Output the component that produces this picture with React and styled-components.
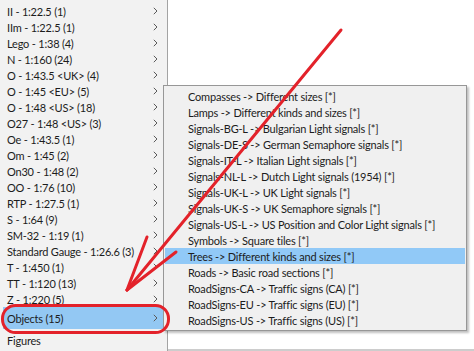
import React from 'react';
import styled, { createGlobalStyle } from 'styled-components';

const Global = createGlobalStyle`
  html, body { margin: 0; padding: 0; background: #fff; }
  body { font-family: Lato, "Noto Sans", sans-serif; }
`;

const Screen = styled.div`
  position: relative;
  width: 474px;
  height: 351px;
  display: flex;
  overflow: hidden;
  background: #fff;
`;

const LeftMenu = styled.div`
  width: 167px;
  flex: none;
  background: #f2f2f2;
  border-right: 1px solid #a3a3a3;
  padding-top: 3px;
  display: flex;
  flex-direction: column;
`;

const Item = styled.div`
  height: ${p => (p.$tall ? 22 : 16)}px;
  flex: none;
  margin: 0 4px 0 3px;
  padding: 0 5px 0 4px;
  display: flex;
  align-items: center;
  justify-content: space-between;
  background: ${p => (p.$active ? '#93c8f3' : 'transparent')};
  font-size: 11px;
  letter-spacing: -0.2px;
  color: #1c1c1c;
  white-space: nowrap;
`;

const RightPane = styled.div`
  flex: 1;
  display: flex;
  flex-direction: column;
`;

const Blank = styled.div`
  flex: 1;
  background: #fff;
`;

const BottomEdge = styled.div`
  height: 2px;
  background: #cdcdcd;
`;

const SubMenu = styled.div`
  position: absolute;
  left: 163px;
  top: 85px;
  width: 300px;
  padding: 2px 1px;
  background: #f0f0f0;
  border: 1px solid #979797;
  box-shadow: 2px 2px 2px rgba(0, 0, 0, 0.25);
  display: flex;
  flex-direction: column;
`;

const SubItem = styled.div`
  height: 16px;
  padding-left: 23px;
  display: flex;
  align-items: center;
  font-size: 11px;
  letter-spacing: -0.2px;
  color: #1c1c1c;
  white-space: nowrap;
  background: ${p => (p.$active ? '#91c9f7' : 'transparent')};
`;

const Overlay = styled.svg`
  position: absolute;
  left: 0;
  top: 0;
  pointer-events: none;
`;

const Chevron = () => (
  <svg width="5" height="8" viewBox="0 0 5 8">
    <path d="M0.8 0.8 L4 4 L0.8 7.2" fill="none" stroke="#5a5a5a" strokeWidth="1" />
  </svg>
);

const scales = [
  'II - 1:22.5 (1)',
  'IIm - 1:22.5 (1)',
  'Lego - 1:38 (4)',
  'N - 1:160 (24)',
  'O - 1:43.5 <UK> (4)',
  'O - 1:45 <EU> (5)',
  'O - 1:48 <US> (18)',
  'O27 - 1:48 <US> (3)',
  'Oe - 1:43.5 (1)',
  'Om - 1:45 (2)',
  'On30 - 1:48 (2)',
  'OO - 1:76 (10)',
  'RTP - 1:27.5 (1)',
  'S - 1:64 (9)',
  'SM-32 - 1:19 (1)',
  'Standard Gauge - 1:26.6 (3)',
  'T - 1:450 (1)',
  'TT - 1:120 (13)',
  'Z - 1:220 (5)',
];

const objects = [
  'Compasses -> Different sizes [*]',
  'Lamps -> Different kinds and sizes [*]',
  'Signals-BG-L -> Bulgarian Light signals [*]',
  'Signals-DE-S -> German Semaphore signals [*]',
  'Signals-IT-L -> Italian Light signals [*]',
  'Signals-NL-L -> Dutch Light signals (1954) [*]',
  'Signals-UK-L -> UK Light signals [*]',
  'Signals-UK-S -> UK Semaphore signals [*]',
  'Signals-US-L -> US Position and Color Light signals [*]',
  'Symbols -> Square tiles [*]',
  'Trees -> Different kinds and sizes [*]',
  'Roads -> Basic road sections [*]',
  'RoadSigns-CA -> Traffic signs (CA) [*]',
  'RoadSigns-EU -> Traffic signs (EU) [*]',
  'RoadSigns-US -> Traffic signs (US) [*]',
];

export default function App() {
  return (
    <>
      <Global />
      <Screen>
        <LeftMenu>
          {scales.map(s => (
            <Item key={s}>
              <span>{s}</span>
              <Chevron />
            </Item>
          ))}
          <Item $tall $active>
            <span>Objects (15)</span>
            <Chevron />
          </Item>
          <Item $tall>
            <span>Figures</span>
          </Item>
        </LeftMenu>
        <RightPane>
          <Blank />
          <BottomEdge />
        </RightPane>
        <SubMenu>
          {objects.map(o => (
            <SubItem key={o} $active={o.startsWith('Trees')}>
              {o}
            </SubItem>
          ))}
        </SubMenu>
        <Overlay width="474" height="351" viewBox="0 0 474 351">
          <g fill="none" stroke="#e3222a" strokeWidth="3" strokeLinecap="round" strokeLinejoin="round">
            <rect x="2.5" y="305.5" width="166" height="27" rx="13" />
            <path d="M341 30 L127 290" />
            <path d="M127 290 L147 237" />
            <path d="M127 290 L176 252" />
          </g>
        </Overlay>
      </Screen>
    </>
  );
}
